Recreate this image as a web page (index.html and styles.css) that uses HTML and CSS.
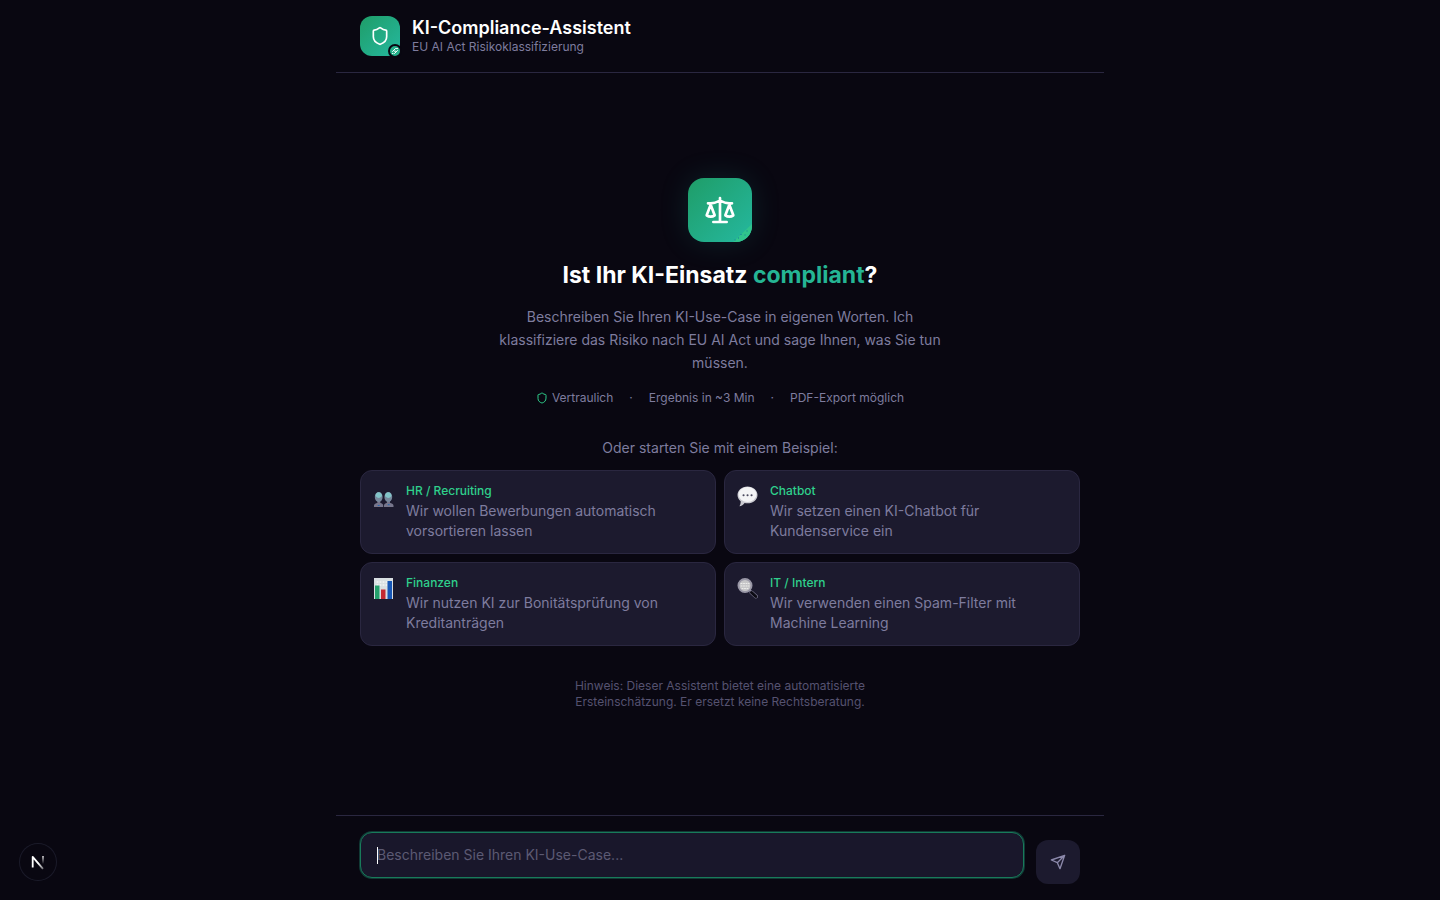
FILE: index.html
```html
<!DOCTYPE html>
<html lang="de">
<head>
    <meta charset="UTF-8">
    <meta name="viewport" content="width=device-width, initial-scale=1.0">
    <title>KI-Compliance-Assistent</title>
    <link rel="stylesheet" href="styles.css">
</head>
<body>

<div class="app">
    <!-- Header -->
    <header class="header">
        <div class="logo">
            <svg class="logo-shield" viewBox="0 0 24 24" aria-hidden="true"><path d="M20 13c0 5-3.5 7.5-7.66 8.95a1 1 0 0 1-.67-.01C7.5 20.5 4 18 4 13V6a1 1 0 0 1 1-1c2 0 4.5-1.2 6.24-2.72a1.17 1.17 0 0 1 1.52 0C14.51 3.81 17 5 19 5a1 1 0 0 1 1 1z"/></svg>
            <span class="logo-badge">
                <svg viewBox="0 0 8 8" aria-hidden="true"><path d="M1.500 4.500 4.500 1.500M3.500 6.500 6.500 3.500M5.500 1.500h1M1.500 6.500h.5M3.500 4.200h1"/></svg>
            </span>
        </div>
        <div>
            <h1 class="title">KI-Compliance-Assistent</h1>
            <p class="subtitle">EU AI Act Risikoklassifizierung</p>
        </div>
    </header>

    <!-- Welcome screen -->
    <main class="welcome">
        <div class="hero-icon">
            <svg class="hero-scale" viewBox="0 0 24 24" aria-hidden="true"><path d="m16 16 3-8 3 8c-.87.65-1.92 1-3 1s-2.130-.35-3-1ZM2 16l3-8 3 8c-.87.65-1.92 1-3 1s-2.130-.35-3-1ZM7 21h10M12 3v18M3 7h2c2 0 5-1 7-2 2 1 5 2 7 2h2"/></svg>
            <svg class="hero-corner" viewBox="0 0 20 20" aria-hidden="true">
                <path d="M1 20 20 2V20Z" fill="#30c48c" stroke="none"/>
                <path d="M3 18h.1M6.500 16h.1M9 12.500h.1M13 13h.1M15 9h.1" stroke="#176fa0" stroke-width="1"/>
            </svg>
        </div>
        <h2 class="headline">Ist Ihr KI-Einsatz <span class="accent">compliant</span>?</h2>
        <p class="intro">Beschreiben Sie Ihren KI-Use-Case in eigenen Worten. Ich klassifiziere das Risiko nach EU AI Act und sage Ihnen, was Sie tun müssen.</p>

        <div class="trust">
            <span class="trust-item">
                <svg viewBox="0 0 24 24" aria-hidden="true"><path d="M20 13c0 5-3.5 7.5-7.66 8.95a1 1 0 0 1-.67-.01C7.5 20.5 4 18 4 13V6a1 1 0 0 1 1-1c2 0 4.5-1.2 6.24-2.72a1.17 1.17 0 0 1 1.52 0C14.51 3.81 17 5 19 5a1 1 0 0 1 1 1z"/></svg>
                Vertraulich
            </span>
            <span>·</span>
            <span>Ergebnis in ~3 Min</span>
            <span>·</span>
            <span>PDF-Export möglich</span>
        </div>

        <p class="examples-label">Oder starten Sie mit einem Beispiel:</p>
        <div class="examples">
            <button type="button" class="card">
                <svg class="card-icon" viewBox="0 0 21 24" aria-hidden="true">
                    <path d="M1 24v-1.500c0-1.500 2-2 3.500-2.700L4 17.500h3.500L7.200 19.800c1.500.7 3 1.200 3 2.700V24Z" fill="#77768c"/>
                    <path d="M11 24v-1.500c0-1.500 1.500-2 3-2.700l-.4-2.300h3.600l-.3 2.300c1.500.7 3.600 1.200 3.600 2.700V24Z" fill="#77768c"/>
                    <ellipse cx="5.700" cy="14" rx="3.900" ry="5" fill="#77889c"/>
                    <ellipse cx="15.300" cy="14" rx="3.900" ry="5" fill="#77889c"/>
                    <path d="M2.500 13c0-5 6.500-5 6.500 0-1.500 2-4 3-6.500 0ZM12 13c0-5 6.500-5 6.500 0-2 3-5 2-6.500 0Z" fill="#82c4c8"/>
                    <path d="M5.200 22.500h1M15.200 21.700h1" stroke="#2767b0" stroke-width="1"/>
                </svg>
                <span class="card-body">
                    <span class="card-tag">HR / Recruiting</span>
                    <span class="card-text">Wir wollen Bewerbungen automatisch vorsortieren lassen</span>
                </span>
            </button>
            <button type="button" class="card">
                <svg class="card-icon" viewBox="0 0 21 24" aria-hidden="true">
                    <path d="M10.500 3.500c5.600 0 10 3.700 10 8.500s-4.400 8.300-10 8.300c-1 0-2-.1-2.900-.4-1.300 1.700-3.100 3-5.200 3.400.9-1.300 1.400-3 1.300-5C1.800 16.800.5 14.600.5 12c0-4.800 4.400-8.500 10-8.500Z" fill="#c9c9d0"/>
                    <ellipse cx="10.500" cy="11.500" rx="9" ry="7.500" fill="#f4f4f6"/>
                    <path d="M6.500 12.200h.1M10.500 12.200h.1M14.500 12.200h.1" stroke="#4c4a60"/>
                </svg>
                <span class="card-body">
                    <span class="card-tag">Chatbot</span>
                    <span class="card-text">Wir setzen einen KI-Chatbot für Kundenservice ein</span>
                </span>
            </button>
            <button type="button" class="card">
                <svg class="card-icon" viewBox="0 0 21 24" aria-hidden="true">
                    <path d="M1 3h19v21H1Z" fill="#d9dfe2"/>
                    <path d="M4 7h10M4 10h10" stroke="#fff" stroke-width="1" stroke-dasharray="1 2"/>
                    <path d="M2 10.500h4.500V24H2Z" fill="#24a06c"/>
                    <path d="M8 14.500h4.500V24H8Z" fill="#c32932"/>
                    <path d="M14.500 6H19v18h-4.500Z" fill="#1757b7"/>
                </svg>
                <span class="card-body">
                    <span class="card-tag">Finanzen</span>
                    <span class="card-text">Wir nutzen KI zur Bonitätsprüfung von Kreditanträgen</span>
                </span>
            </button>
            <button type="button" class="card">
                <svg class="card-icon" viewBox="0 0 21 24" aria-hidden="true">
                    <path d="M12 14.500 14.500 17" stroke="#8c89a0"/>
                    <path d="M14.500 17.500 19 21.500" stroke="#77748c" stroke-width="4"/>
                    <path d="M14.500 17.500 18.800 21.500" stroke="#0c0b14" stroke-width="3"/>
                    <circle cx="8" cy="10.500" r="6.500" fill="#c6c6c8" stroke="#9997a6"/>
                    <path d="M4 8.500h8M4 11h8M5 13.500h6" stroke="#ececea" stroke-width="1" stroke-dasharray="1 1.500"/>
                </svg>
                <span class="card-body">
                    <span class="card-tag">IT / Intern</span>
                    <span class="card-text">Wir verwenden einen Spam-Filter mit Machine Learning</span>
                </span>
            </button>
        </div>

        <p class="note">Hinweis: Dieser Assistent bietet eine automatisierte Ersteinschätzung. Er ersetzt keine Rechtsberatung.</p>
    </main>

    <!-- Message input -->
    <form class="composer">
        <div class="message-wrap">
            <textarea class="message" rows="1" placeholder="Beschreiben Sie Ihren KI-Use-Case..." aria-label="Nachricht" autofocus></textarea>
            <span class="caret"></span>
        </div>
        <button type="submit" class="send" aria-label="Senden">
            <svg viewBox="0 0 24 24" aria-hidden="true"><path d="m22 2-7 20-4-9-9-4ZM22 2 11 13"/></svg>
        </button>
    </form>
</div>

<!-- Dev tools button -->
<button type="button" class="devtools" aria-label="Open Next.js Dev Tools">
    <svg viewBox="0 0 36 36" aria-hidden="true">
        <defs>
            <linearGradient id="fadeDiagonal" x1="19" y1="19" x2="24" y2="26" gradientUnits="userSpaceOnUse">
                <stop stop-color="#fff"/>
                <stop offset="1" stop-color="#fff" stop-opacity="0.3"/>
            </linearGradient>
            <linearGradient id="fadeStem" x1="23" y1="12" x2="23" y2="20" gradientUnits="userSpaceOnUse">
                <stop stop-color="#fff"/>
                <stop offset="1" stop-color="#fff" stop-opacity="0"/>
            </linearGradient>
        </defs>
        <path d="M12.700 23.500V12.800L23 24.800" stroke="url(#fadeDiagonal)" stroke-width="1.800" stroke-linecap="butt"/>
        <path d="M22.300 12h1.400v8h-1.400Z" fill="url(#fadeStem)" stroke="none"/>
    </svg>
</button>

</body>
</html>
```

FILE: styles.css
```css
* {
    box-sizing: border-box;
}

body {
    margin: 0;
    background-color: #090711;
    color: #fff;
    font-family: Inter, "Liberation Sans", sans-serif;
    font-size: 14px;
    line-height: 20px;
}

h1, h2, p {
    margin: 0;
}

button, textarea {
    font: inherit;
}

svg {
    display: block;
    fill: none;
    stroke: currentColor;
    stroke-width: 2;
    stroke-linecap: round;
    stroke-linejoin: round;
}

.app {
    display: flex;
    flex-direction: column;
    max-width: 768px;
    min-height: 100vh;
    margin: 0 auto;
}

/* Header */
.header {
    display: flex;
    align-items: center;
    gap: 12px;
    padding: 16px 24px;
    border-bottom: 1px solid #2a2740;
}

.logo {
    position: relative;
    display: flex;
    align-items: center;
    justify-content: center;
    width: 40px;
    height: 40px;
    border-radius: 12px;
    background: linear-gradient(135deg, #1f9d68, #25b89f);
}

.logo-shield {
    width: 20px;
    height: 20px;
}

.logo-badge {
    position: absolute;
    right: -2px;
    bottom: -2px;
    display: flex;
    align-items: center;
    justify-content: center;
    width: 14px;
    height: 14px;
    border: 2px solid #090711;
    border-radius: 50%;
    background-color: #25b08a;
}

.logo-badge svg {
    width: 8px;
    height: 8px;
    stroke-width: 1;
}

.title {
    font-size: 18px;
    line-height: 22px;
    font-weight: 600;
}

.subtitle {
    color: #7e7c9e;
    font-size: 12px;
    line-height: 16px;
}

/* Welcome */
.welcome {
    flex: 1;
    display: flex;
    flex-direction: column;
    align-items: center;
    justify-content: center;
    padding: 24px;
    text-align: center;
    color: #7e7c9e;
}

.hero-icon {
    position: relative;
    display: flex;
    align-items: center;
    justify-content: center;
    width: 64px;
    height: 64px;
    margin-bottom: 16px;
    border-radius: 16px;
    background: linear-gradient(135deg, #1f9d68, #25b89f);
    box-shadow: 0 0 30px rgba(37, 184, 159, 0.15);
    color: #fff;
}

.hero-scale {
    width: 32px;
    height: 32px;
}

.hero-corner {
    position: absolute;
    right: 0;
    bottom: 0;
    width: 20px;
    height: 20px;
    border-bottom-right-radius: 16px;
    overflow: hidden;
}

.headline {
    margin-bottom: 13px;
    color: #fff;
    font-size: 23px;
    line-height: 34px;
    font-weight: 700;
}

.accent {
    color: #25b594;
}

.intro {
    max-width: 448px;
    margin-bottom: 16px;
    line-height: 23px;
}

.trust {
    display: flex;
    gap: 16px;
    margin-bottom: 32px;
    font-size: 12px;
    line-height: 16px;
}

.trust-item {
    display: flex;
    align-items: center;
    gap: 4px;
}

.trust-item svg {
    width: 12px;
    height: 12px;
    color: #2fd08c;
}

.examples-label {
    margin-bottom: 12px;
}

.examples {
    display: grid;
    grid-template-columns: 1fr 1fr;
    gap: 8px;
    width: 100%;
    margin-bottom: 32px;
}

.card {
    display: flex;
    align-items: flex-start;
    gap: 12px;
    padding: 12px;
    border: 1px solid #2a2740;
    border-radius: 12px;
    background-color: #1c1a2e;
    color: #7e7c9e;
    text-align: left;
    cursor: pointer;
}

.card:hover {
    border-color: #25b08a;
}

.card-icon {
    flex-shrink: 0;
    width: 21px;
    height: 24px;
    stroke: none;
}

.card-body {
    display: flex;
    flex-direction: column;
    gap: 2px;
}

.card-tag {
    color: #2fd08c;
    font-size: 12px;
    line-height: 16px;
    font-weight: 500;
}

.note {
    max-width: 320px;
    color: #555270;
    font-size: 12px;
    line-height: 16px;
}

/* Message input */
.composer {
    display: flex;
    align-items: flex-end;
    gap: 12px;
    padding: 16px 24px;
    border-top: 1px solid #2a2740;
}

.message-wrap {
    position: relative;
    flex: 1;
    padding-bottom: 6px;
}

.message {
    display: block;
    width: 100%;
    height: 46px;
    padding: 12px 16px;
    border: 1px solid #187b5a;
    border-radius: 12px;
    outline: none;
    background-color: #19172b;
    box-shadow: 0 0 0 1px rgba(37, 176, 138, 0.3);
    color: #fff;
    resize: none;
}

.message::placeholder {
    color: #5c5a73;
}

/* Own caret while the field is empty */
.caret {
    display: none;
    position: absolute;
    left: 17px;
    top: 15px;
    width: 1px;
    height: 17px;
    background-color: #fff;
}

.message:placeholder-shown {
    caret-color: transparent;
}

.message:placeholder-shown + .caret {
    display: block;
}

.send {
    display: flex;
    align-items: center;
    justify-content: center;
    width: 44px;
    height: 44px;
    padding: 0;
    border: none;
    border-radius: 12px;
    background-color: #1c1a2e;
    color: #8c89ab;
    cursor: pointer;
}

.send svg {
    width: 16px;
    height: 16px;
}

/* Dev tools */
.devtools {
    position: fixed;
    left: 20px;
    bottom: 20px;
    width: 36px;
    height: 36px;
    padding: 0;
    border: none;
    border-radius: 50%;
    background-color: #090711;
    box-shadow: 0 0 0 1px #1b1b2a;
    cursor: pointer;
}
```
